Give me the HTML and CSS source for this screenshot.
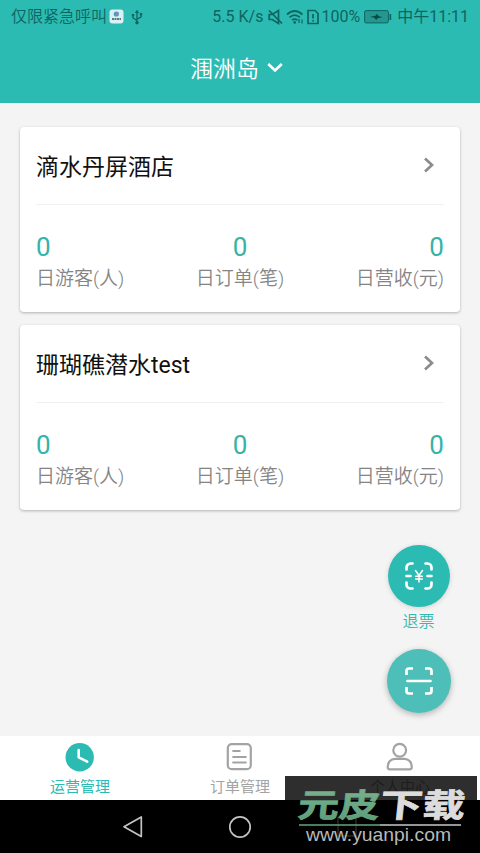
FILE: index.html
```html
<!DOCTYPE html>
<html lang="zh-CN">
<head>
<meta charset="utf-8">
<meta name="viewport" content="width=device-width, initial-scale=1">
<title>运营管理</title>
<link rel="stylesheet" href="styles.css">
</head>
<body>
<div class="phone">
  <header class="header">
    <div class="status">
      <span class="carrier">仅限紧急呼叫</span>
      <svg class="app-icon" width="15" height="15" viewBox="0 0 15 15"><rect x=".5" y=".5" width="14" height="14" rx="3" fill="#d9f1f3"/><circle cx="7.3" cy="5" r="2.6" fill="#4b9dc4"/><circle cx="8.5" cy="4.4" r="1.3" fill="#a77fb5"/><path d="M3 10h9" stroke="#35535c" stroke-width="1.4" stroke-dasharray="2 .5"/></svg>
      <svg class="usb" width="12" height="16" viewBox="0 0 12 16" fill="none" stroke="#0e6560" stroke-width="1.3"><path d="M6 3v11M6 11.5 2 9V6M6 10l4-2V5"/><path d="M3.8 4 6 .8 8.2 4z" fill="#0e6560" stroke="none"/><circle cx="6" cy="13.7" r="1.7" fill="#0e6560" stroke="none"/><path d="M.8 5h2.4v2.2H.8zM8.8 4h2.4v2.2H8.8z" fill="#0e6560" stroke="none"/></svg>
      <span class="speed">5.5 K/s</span>
      <svg class="mute" width="15" height="16" viewBox="0 0 15 16" fill="none" stroke="#0e6560" stroke-width="1.7"><path d="M1.200 5.500h3L10.500 1.500v13L4.200 10.500h-3z"/><path d="M1 1.500l13 13"/></svg>
      <svg class="wifi" width="18" height="16" viewBox="0 0 18 16" fill="none" stroke="#0e6560" stroke-width="1.700"><path d="M1 5.500q7.700-7 15.400 0M3.500 8.400q5.200-4.700 10.400 0M6 11.200q2.700-2.300 5.400 0"/><circle cx="8.700" cy="13.400" r="1.300" fill="#0e6560" stroke="none"/><path d="M13 10v4M16 10.500v4" stroke-width="1.200"/></svg>
      <svg class="sim" width="12" height="16" viewBox="0 0 12 16" fill="none" stroke="#0e6560" stroke-width="1.700"><path d="M1 1.500h7l3 3v10H1zM6 5v4.500M6 11v1.600"/></svg>
      <span class="percent">100%</span>
      <svg class="battery" width="28" height="14" viewBox="0 0 28 14"><rect x=".6" y=".6" width="23.800" height="12.300" rx="1.500" fill="#249790" stroke="#0e6560"/><path d="M25.500 4h1.700v6h-1.700z" fill="#0e6560"/><path d="m6 7 6-1.500.7-1.700 2 2.500L18.500 7l-5.500 1.400-.8 1.900-1.700-2.600z" fill="#064943"/></svg>
      <span class="time">中午11:11</span>
    </div>
    <div class="location">
      <h1 class="location-name">涠洲岛</h1>
      <svg width="16" height="10" viewBox="0 0 16 10" fill="none" stroke="#fff" stroke-width="2.600"><path d="m1.200 1 6.800 6.500L14.800 1"/></svg>
    </div>
  </header>

  <main class="content">
    <section class="card">
      <div class="card-head">
        <h2 class="card-title">滴水丹屏酒店</h2>
        <svg class="chevron" width="12" height="16" viewBox="0 0 12 16"><path d="m2 1.500 7 6.500-7 6.500"/></svg>
      </div>
      <div class="stats">
        <div class="stat"><span class="value">0</span><span class="label">日游客(人)</span></div>
        <div class="stat stat-mid"><span class="value">0</span><span class="label">日订单(笔)</span></div>
        <div class="stat stat-end"><span class="value">0</span><span class="label">日营收(元)</span></div>
      </div>
    </section>
    <section class="card">
      <div class="card-head">
        <h2 class="card-title">珊瑚礁潜水test</h2>
        <svg class="chevron" width="12" height="16" viewBox="0 0 12 16"><path d="m2 1.500 7 6.500-7 6.500"/></svg>
      </div>
      <div class="stats">
        <div class="stat"><span class="value">0</span><span class="label">日游客(人)</span></div>
        <div class="stat stat-mid"><span class="value">0</span><span class="label">日订单(笔)</span></div>
        <div class="stat stat-end"><span class="value">0</span><span class="label">日营收(元)</span></div>
      </div>
    </section>
    <div class="actions">
      <div class="fab">
        <svg width="30" height="30" viewBox="0 0 30 30" fill="none" stroke="#fff" stroke-width="2.700" stroke-linecap="round"><path d="M2.500 8.500V6.500a4 4 0 0 1 4-4h2M21.500 2.500h2a4 4 0 0 1 4 4v2M27.500 21.500v2a4 4 0 0 1-4 4h-2M8.500 27.500h-2a4 4 0 0 1-4-4v-2M2.500 15h4M23.500 15h4"/><path d="m11.500 9.500 3.500 5 3.500-5M15 14.500v6.500M11.700 15.200h6.600M11.700 18h6.600" stroke-width="1.500"/></svg>
      </div>
      <span class="fab-label">退票</span>
      <div class="fab fab-scan">
        <svg width="30" height="30" viewBox="0 0 30 30" fill="none" stroke="#fff" stroke-width="2.700"><path d="M2.500 9V5a2.500 2.500 0 0 1 2.500-2.500h4M21 2.500h4a2.500 2.500 0 0 1 2.500 2.500v4M27.500 21v4a2.500 2.500 0 0 1-2.500 2.500h-4M9 27.500H5a2.500 2.500 0 0 1-2.500-2.500v-4"/><path d="M3.500 15h23" stroke-linecap="round"/></svg>
      </div>
    </div>
  </main>

  <nav class="tabs">
    <div class="tab tab-active">
      <svg width="30" height="30" viewBox="0 0 30 30"><circle cx="14.700" cy="15.300" r="14.200" fill="#2cbbb3"/><path d="M13.700 8v7.300l8.500 4.300" fill="none" stroke="#fff" stroke-width="2.600" stroke-linecap="round" stroke-linejoin="round"/></svg>
      <span>运营管理</span>
    </div>
    <div class="tab">
      <svg width="30" height="30" viewBox="0 0 30 30" fill="none" stroke="#a3a3a3" stroke-width="2.200" stroke-linecap="round"><rect x="2.800" y="2.200" width="23" height="25" rx="4"/><path d="M8.200 9h6.500M8.200 15h12.500M8.200 20.500h12.500"/></svg>
      <span>订单管理</span>
    </div>
    <div class="tab">
      <svg width="30" height="30" viewBox="0 0 30 30" fill="none" stroke="#a3a3a3" stroke-width="2.200"><circle cx="14.700" cy="8.200" r="6.400"/><path d="M10 16.800h9.500c4.500 0 7.300 4 7.300 8.200 0 1.700-.8 2.300-2.300 2.300H4.800c-1.500 0-2.100-.6-2.100-2.300 0-4.300 2.900-8.200 7.300-8.200z"/></svg>
      <span>个人中心</span>
    </div>
  </nav>

  <footer class="sysbar">
    <svg width="22" height="24" viewBox="0 0 22 24" fill="none" stroke="#c4c4c4" stroke-width="1.700" stroke-linejoin="round"><path d="M19.300 2v19.500L2 11.700z"/></svg>
    <svg width="24" height="24" viewBox="0 0 24 24" fill="none" stroke="#c4c4c4" stroke-width="1.700"><circle cx="12" cy="12" r="10.200"/></svg>
    <svg width="22" height="24" viewBox="0 0 22 24" fill="none" stroke="#c4c4c4" stroke-width="1.700"><rect x="2" y="3" width="18" height="18"/></svg>
  </footer>

  <div class="watermark">
    <svg width="192" height="77" viewBox="0 0 192 77">
      <defs><linearGradient id="leaf" x1="0" y1="0" x2="0" y2="1"><stop offset="0" stop-color="#82b796"/><stop offset="1" stop-color="#579b75"/></linearGradient></defs>
      <g class="wm-name" transform="translate(14 40.500) skewX(-6) scale(1 .93)">
        <text x="-2" y="0" textLength="82" lengthAdjust="spacingAndGlyphs" fill="url(#leaf)" stroke="#6aa684">元皮</text>
        <text x="80" y="0" textLength="85" lengthAdjust="spacingAndGlyphs" fill="#dcdcdc" stroke="#dcdcdc">下载</text>
      </g>
      <path d="M14 49h81" stroke="#62a77e" stroke-width="1.500"/><path d="M95 49h81" stroke="#c8c8c8" stroke-width="1.500"/>
      <text class="wm-url" x="21" y="65" textLength="145" lengthAdjust="spacingAndGlyphs">www.yuanpi.com</text>
    </svg>
  </div>
</div>
</body>
</html>
```
FILE: styles.css
```css
* { box-sizing: border-box; }

body {
  margin: 0;
  font-family: Roboto, "Noto Sans CJK SC", sans-serif;
  background: #f4f4f4;
}

h1, h2 { margin: 0; font-weight: 400; }
svg { display: block; flex: none; }

.phone {
  position: relative;
  display: flex;
  flex-direction: column;
  width: 480px;
  height: 853px;
  overflow: hidden;
}

.header {
  height: 103px;
  flex: none;
  background: #2cbbb3;
}

.status {
  display: flex;
  align-items: center;
  height: 33px;
  padding: 0 11px;
  font-size: 16px;
  line-height: 20px;
  color: #0e6560;
  white-space: nowrap;
}

.carrier { font-weight: 350; }
.app-icon { margin-left: 2px; }
.usb { margin-left: 7px; }
.speed { margin-left: auto; }
.mute { margin-left: 5px; }
.wifi { margin-left: 3px; }
.sim { margin-left: 3px; }
.percent { margin-left: 2px; }
.battery { margin-left: 4px; }
.time { margin-left: 5px; }

.location {
  display: flex;
  align-items: center;
  justify-content: center;
  gap: 8px;
  height: 70px;
  padding-right: 7px;
  color: #fff;
}

.location-name {
  padding-top: 3px;
  font-size: 23px;
  font-weight: 350;
  line-height: 30px;
}

.content {
  display: flex;
  flex-direction: column;
  gap: 13px;
  height: 633px;
  padding: 24px 20px 0;
}

.card {
  height: 185px;
  flex: none;
  padding: 0 16px;
  background: #fff;
  border-radius: 4px;
  box-shadow: 0 1px 3px rgba(0, 0, 0, 0.28);
}

.card-head {
  display: flex;
  align-items: center;
  justify-content: space-between;
  height: 78px;
  padding: 0 9px 2px 0;
  border-bottom: 1px solid #f0f0f0;
}

.card-title {
  padding-top: 6px;
  font-size: 23px;
  line-height: 30px;
  color: #111;
}

.chevron {
  fill: none;
  stroke: #8c8c8c;
  stroke-width: 2.7;
}

.stats {
  display: flex;
  justify-content: space-between;
  padding-top: 26px;
}

.stat { display: flex; flex-direction: column; }
.stat-mid { align-items: center; }
.stat-end { align-items: flex-end; }
.value { font-size: 26px; line-height: 32px; color: #35b3a8; }

.label {
  padding-top: 1px;
  font-size: 19px;
  font-weight: 350;
  line-height: 30px;
  color: #858585;
}

.actions {
  display: flex;
  flex-direction: column;
  align-items: center;
  align-self: flex-end;
  width: 64px;
  margin: 22px 9.5px 0 0;
}

.fab {
  display: flex;
  align-items: center;
  justify-content: center;
  width: 62px;
  height: 62px;
  border-radius: 50%;
  background: #2cbbb3;
  box-shadow: 0 1px 5px rgba(0, 0, 0, 0.15);
}

.fab-label {
  margin: 3px 0 15px;
  font-size: 16px;
  font-weight: 350;
  line-height: 24px;
  color: #35b8b0;
}

.fab-scan {
  width: 64px;
  height: 64px;
  background: #4dbfb8;
  box-shadow: 0 2px 6px rgba(0, 0, 0, 0.28);
}

.tabs {
  display: flex;
  height: 64px;
  flex: none;
  background: #fff;
}

.tab {
  display: flex;
  flex: 1;
  flex-direction: column;
  align-items: center;
  padding-top: 6px;
  font-size: 15px;
  line-height: 22px;
  color: #a3a3a3;
}

.tab span { margin-top: 4px; }
.tab-active { color: #2cbbb3; }

.sysbar {
  display: flex;
  align-items: center;
  justify-content: center;
  gap: 84px;
  flex: 1;
  background: #000;
}

.watermark {
  position: absolute;
  left: 285px;
  top: 776px;
  width: 192px;
  height: 77px;
  background: rgba(0, 0, 0, 0.82);
}

.wm-name {
  font-family: "Noto Sans CJK SC", sans-serif;
  font-size: 35px;
  font-weight: 700;
  stroke-width: 0.8px;
}

.wm-url {
  font-family: "Liberation Sans", sans-serif;
  font-size: 19px;
  fill: #b9b9b9;
}
```
